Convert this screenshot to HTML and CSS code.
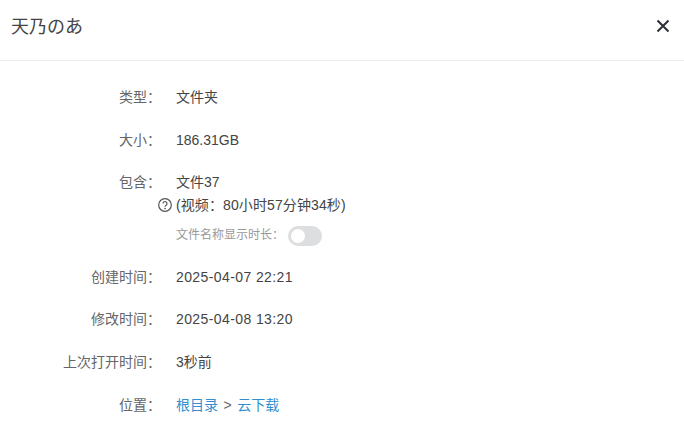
FILE: index.html
```html
<!DOCTYPE html>
<html lang="zh">
<head>
<meta charset="utf-8">
<title>详情</title>
<link rel="stylesheet" href="styles.css">
</head>
<body>
<header class="head">
  <h1 class="title">天乃のあ</h1>
  <svg class="close" viewBox="0 0 14 14" width="14" height="14"><path d="M1.5 1.5L12.5 12.5M12.5 1.5L1.5 12.5" stroke="#2b2f36" stroke-width="2" fill="none"/></svg>
</header>
<main class="rows">
  <div class="row"><div class="label">类型：</div><div class="value">文件夹</div></div>
  <div class="row"><div class="label">大小：</div><div class="value">186.31GB</div></div>
  <div class="row"><div class="label">包含：</div><div class="value">
    <div>文件37</div>
    <div class="media"><svg class="help" viewBox="0 0 14 14" width="14" height="14"><circle cx="7" cy="7" r="6.3" fill="none" stroke="#555" stroke-width="1.2"/><path d="M5 5.5a2 2 0 1 1 3.1 1.7c-.7.4-1.1.8-1.1 1.5" fill="none" stroke="#555" stroke-width="1.2"/><circle cx="7" cy="10.6" r=".8" fill="#555"/></svg><span class="media-text">(视频：80小时57分钟34秒)</span></div>
    <div class="toggle-row"><span>文件名称显示时长：</span><span class="switch"><span class="knob"></span></span></div>
  </div></div>
  <div class="row"><div class="label">创建时间：</div><div class="value date">2025-04-07 22:21</div></div>
  <div class="row"><div class="label">修改时间：</div><div class="value date">2025-04-08 13:20</div></div>
  <div class="row"><div class="label">上次打开时间：</div><div class="value">3秒前</div></div>
  <div class="row"><div class="label">位置：</div><div class="value"><a class="link">根目录</a><span class="sep">&gt;</span><a class="link">云下载</a></div></div>
</main>
</body>
</html>
```
FILE: styles.css
```css
* { box-sizing: border-box; }
html, body { margin: 0; padding: 0; background: #fff; }
body {
  width: 684px;
  height: 439px;
  overflow: hidden;
  font-family: "Liberation Sans", "Noto Sans CJK SC", sans-serif;
  font-size: 14px;
  color: #333;
}
.head {
  height: 61px;
  border-bottom: 1px solid #ebebeb;
  display: flex;
  align-items: center;
  justify-content: space-between;
  padding: 0 14px 0 11px;
}
.title { margin: 0; font-size: 18px; font-weight: 400; color: #444; line-height: 24px; padding-bottom: 7px; }
.close { display: block; margin-bottom: 8px; }
.rows { padding-top: 26px; display: flex; flex-direction: column; gap: 21.6px; }
.row { display: flex; line-height: 21px; }
.label { width: 161px; margin-right: 15px; text-align: right; color: #666; flex: none; }
.value { color: #444; }
.date { letter-spacing: 0.4px; }
.media { line-height: 24px; margin-left: -18px; display: flex; align-items: center; gap: 4px; white-space: nowrap; }
.media-text { letter-spacing: 0.1px; }
.help { display: block; }
.toggle-row { display: flex; align-items: center; gap: 4px; margin-top: 8px; margin-bottom: -1px; height: 21px; font-size: 12px; color: #999; }
.switch { width: 34px; height: 20px; border-radius: 10px; background: #dcdee0; padding: 3px; display: block; }
.knob { display: block; width: 14px; height: 14px; border-radius: 50%; background: #fff; }
.link { color: #2f8fd0; }
.sep { color: #666; margin: 0 5.5px; }
```
